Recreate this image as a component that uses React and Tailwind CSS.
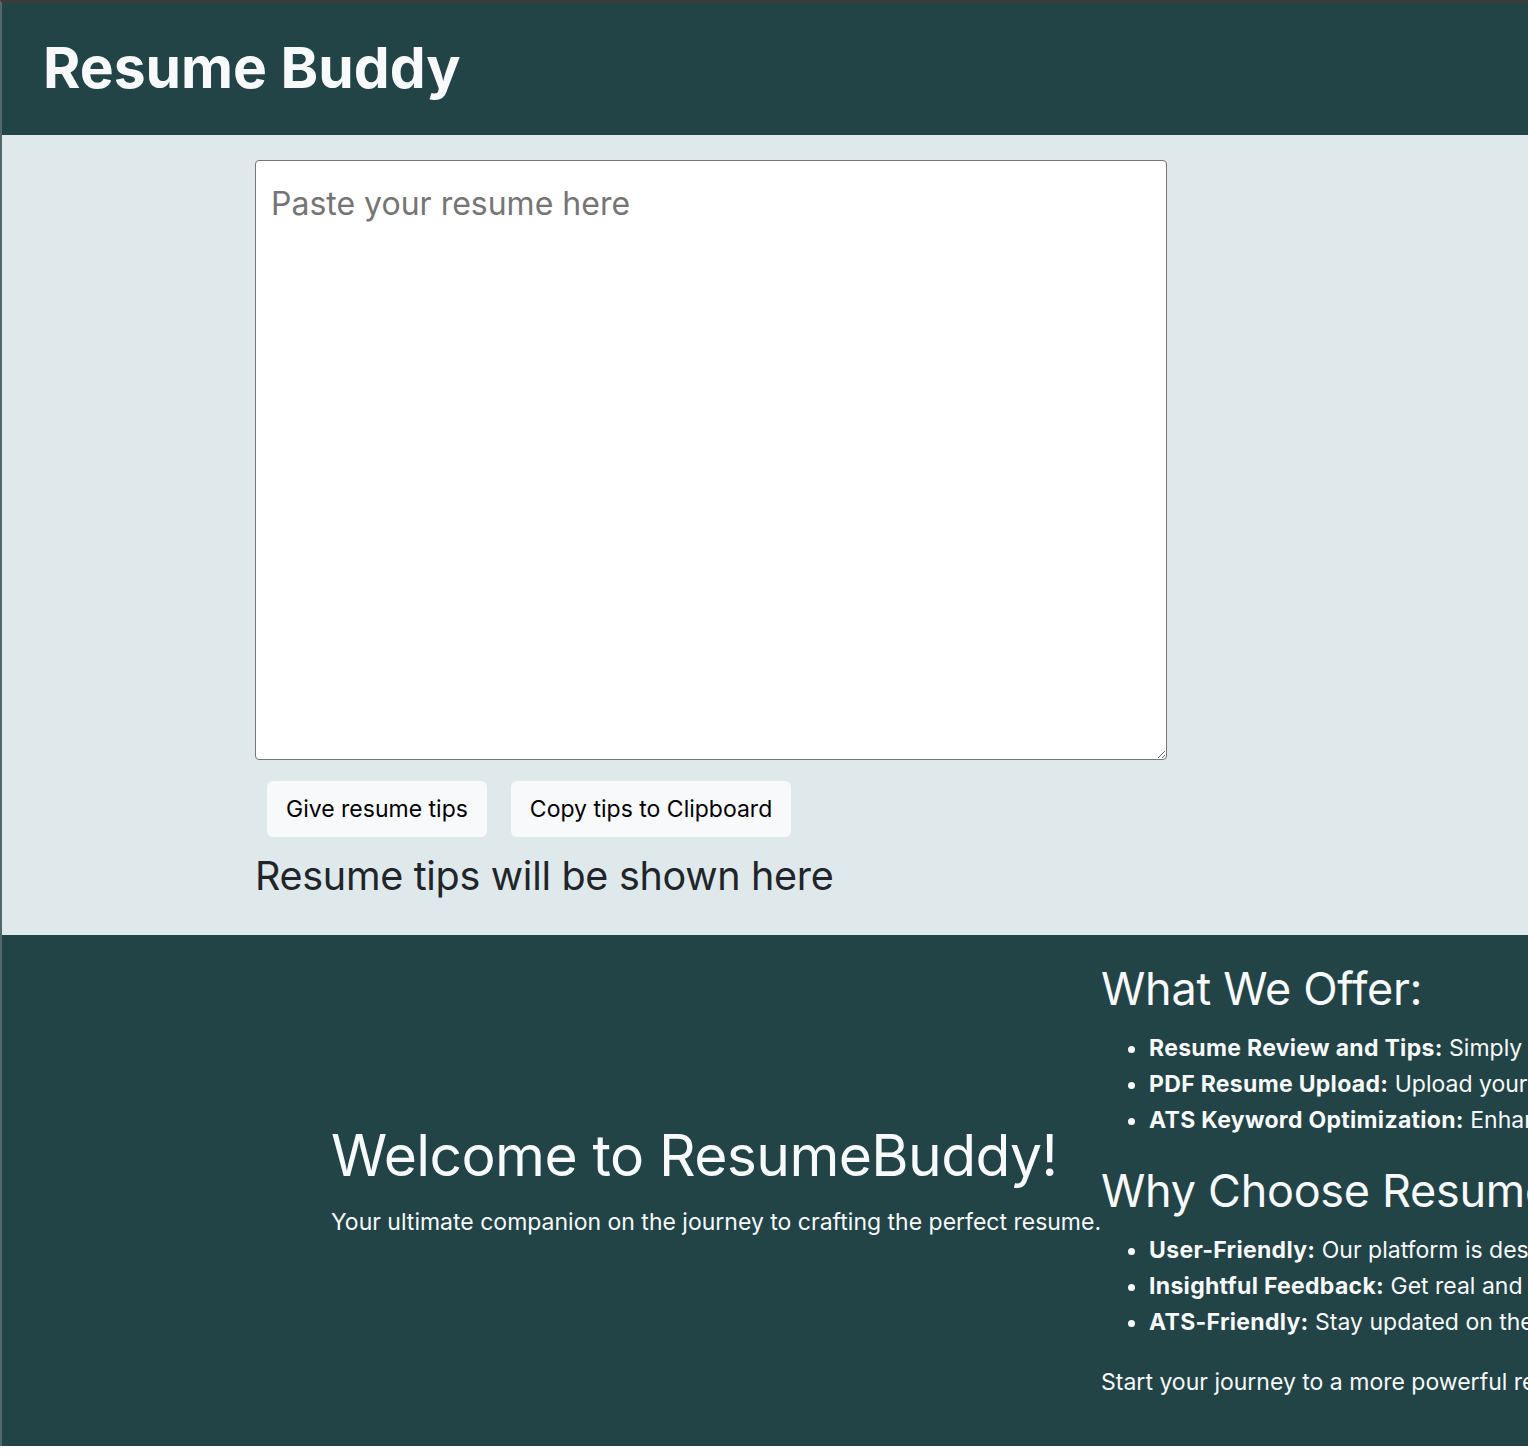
import React, { useState } from 'react'

const offers = [
  ['Resume Review and Tips:', ' Simply paste your resume and get personalized tips to make it stand out.'],
  ['PDF Resume Upload:', ' Upload your resume as a PDF and let us extract the text for you.'],
  ['ATS Keyword Optimization:', ' Enhance your resume with keywords that applicant tracking systems look for.'],
]

const reasons = [
  ['User-Friendly:', ' Our platform is designed to be simple and intuitive for everyone.'],
  ['Insightful Feedback:', ' Get real and actionable feedback to improve every section of your resume.'],
  ['ATS-Friendly:', ' Stay updated on the latest practices recruiters and ATS software expect.'],
]

const App = () => {
  const [resume, setResume] = useState('')

  return (
    <div className="min-h-screen w-full overflow-x-hidden bg-white font-['Inter','Noto_Sans',sans-serif]">
      <div className="border-t-[3px] border-l-2 border-t-[#3b3b3b] border-l-[#52686a]">
        {/* header */}
        <header className="h-[132px] bg-[#224447] flex items-center px-[41px]">
          <h1 className="text-[57px] font-bold text-[#f8f9fa] tracking-[0px] leading-none -mt-[4px]">Resume Buddy</h1>
        </header>

        {/* main */}
        <main className="bg-[#dfe9eb] pt-[25px] pb-[35px] pl-[253px]">
          <textarea
            value={resume}
            onChange={(e) => setResume(e.target.value)}
            placeholder="Paste your resume here"
            className="block w-[912px] h-[600px] bg-white border border-[#767676] rounded-[4px] px-[15px] pt-[24px] pb-[16px] text-[32px] leading-[1.2] text-[#212529] placeholder:text-[#757575] resize-y outline-none"
          />
          <div className="flex gap-[24px] pl-[12px] mt-[21px]">
            <button className="h-[56px] px-[19px] bg-[#f8f9fa] rounded-[6px] text-[23px] text-black">Give resume tips</button>
            <button className="h-[56px] px-[19px] bg-[#f8f9fa] rounded-[6px] text-[23px] text-black">Copy tips to Clipboard</button>
          </div>
          <h2 className="mt-[16px] text-[39.5px] text-[#212529] leading-[1.2] tracking-[-0.3px]">Resume tips will be shown here</h2>
        </main>

        {/* footer */}
        <footer className="h-[511px] bg-[#224447] text-[#f8f9fa] flex items-center pl-[329px]">
          <div className="shrink-0 whitespace-nowrap -mt-[20px]">
            <h2 className="text-[57px] leading-[1.2] tracking-[-0.6px]">Welcome to ResumeBuddy!</h2>
            <p className="mt-[14px] text-[23px] leading-[1.5]">Your ultimate companion on the journey to crafting the perfect resume.</p>
          </div>
          <div className="shrink-0 whitespace-nowrap self-start pt-[27px]">
            <h3 className="text-[45px] leading-[1.2] tracking-[-0.3px]">What We Offer:</h3>
            <ul className="list-disc pl-[48px] mt-[14px] text-[23px] leading-[36px]">
              {offers.map(([label, text]) => (
                <li key={label}><strong className="font-bold tracking-[0.3px]">{label}</strong>{text}</li>
              ))}
            </ul>
            <h3 className="mt-[26px] text-[45px] leading-[1.2] tracking-[-0.3px]">Why Choose ResumeBuddy?</h3>
            <ul className="list-disc pl-[48px] mt-[14px] text-[23px] leading-[36px]">
              {reasons.map(([label, text]) => (
                <li key={label}><strong className="font-bold tracking-[0.3px]">{label}</strong>{text}</li>
              ))}
            </ul>
            <p className="mt-[24px] text-[23px] leading-[36px]">Start your journey to a more powerful resume with ResumeBuddy today.</p>
          </div>
        </footer>
      </div>
    </div>
  )
}

export default App
